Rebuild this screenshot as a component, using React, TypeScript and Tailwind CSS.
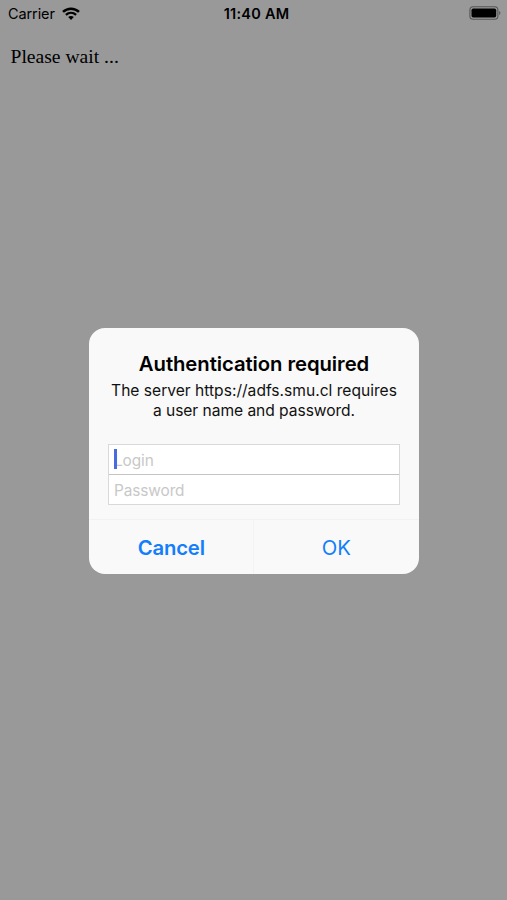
function StatusBar() {
  return (
    <header className="grid h-7 grid-cols-3 items-center text-[14.5px] leading-7">
      <div className="flex h-7 items-center pl-[8px]">
        <span className="tracking-[-0.1px]">Carrier</span>
        <svg className="ml-[7.500px] mt-[-2px] h-[13px] w-[18px]" viewBox="0 0 18 13" fill="none" stroke="black">
          <path d="M1 4.9C5.500.6 12.500.6 17 4.900" strokeWidth="2.500" />
          <path d="M3.900 7.900C6.900 5.100 11.100 5.100 14.100 7.900" strokeWidth="2.300" />
          <path d="M9 12.900 6.200 10.100C7.800 8.600 10.200 8.600 11.800 10.100Z" fill="black" stroke="none" />
        </svg>
      </div>
      <div className="text-center font-semibold tracking-[0.25px] whitespace-nowrap pl-[6px]">11:40 AM</div>
      <div className="flex h-7 items-center justify-end pr-[6px]">
        <svg className="mt-[-2px] h-[14px] w-[32px]" viewBox="0 0 32 14">
          <rect x="0.900" y="0.800" width="28" height="12.400" rx="3.300" fill="none" stroke="#555555" strokeWidth="1.100" />
          <rect x="2.500" y="2.500" width="24.700" height="9" rx="1.700" fill="black" />
          <path d="M30.200 5v4c1.600-.7 1.600-3.300 0-4Z" fill="#555555" />
        </svg>
      </div>
    </header>
  );
}

export default function App() {
  return (
    <div className="flex h-[900px] w-[507px] flex-col bg-[#999999] font-['Inter','Liberation_Sans',sans-serif] text-black">
      <StatusBar />
      <p className="ml-[10.500px] mt-[17px] h-6 font-['Liberation_Serif',serif] text-[19.6px] leading-6">Please wait ...</p>
      <section className="ml-[89px] mt-[258.500px] flex h-[246.500px] w-[330px] flex-col overflow-hidden rounded-[16px] bg-[#f9f9f9]">
        <h1 className="mt-[23px] text-center text-[20.3px] leading-[26px] font-semibold tracking-[-0.07px] whitespace-nowrap">
          Authentication required
        </h1>
        <p className="mt-[4px] text-center text-[15.6px] leading-[20px] text-[#111111] whitespace-nowrap">
          <span>The server https://adfs.smu.cl requires</span>
          <br />
          <span className="tracking-[-0.05px]">a user name and password.</span>
        </p>
        <div className="mx-[19px] mt-[23.500px] flex h-[61px] flex-col border border-[#d9d9d9] bg-white text-[15.400px] text-[#c8c8c8]">
          <div className="flex h-[30px] items-center border-b border-[#c4c4c4] pl-[5px]">
            <span className="relative pt-[2px] tracking-[-0.1px]">
              Login
              <span className="absolute left-0 top-[2px] h-[20px] w-[2.500px] bg-[#4a6be0]" />
            </span>
          </div>
          <div className="flex flex-1 items-center pl-[5px] pt-[2px] tracking-[-0.1px]">Password</div>
        </div>
        <div className="mt-auto flex h-[55px] border-t border-[#f2f2f2] text-[20.300px] text-[#147efb]">
          <button className="w-[164.500px] border-r border-[#f3f3f3] pt-[2px] pl-[1px] font-semibold tracking-[-0.15px]">Cancel</button>
          <button className="flex-1 pt-[2px] tracking-[-0.1px]">OK</button>
        </div>
      </section>
    </div>
  );
}
